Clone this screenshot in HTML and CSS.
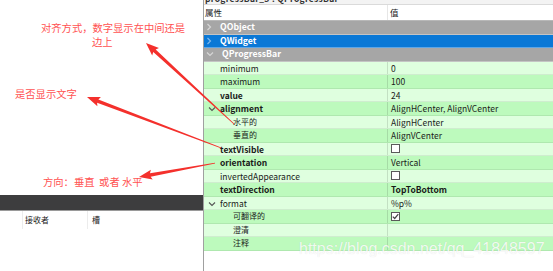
FILE: index.html
```html
<!DOCTYPE html>
<html lang="zh-CN">
<head>
    <meta charset="UTF-8">
    <title>QProgressBar 属性</title>
    <link rel="stylesheet" href="styles.css">
</head>
<body>
    <div class="shot">
        <div class="left-pane">
            <div class="notes">
                <div class="note note-align">对齐方式，数字显示在中间还是</div>
                <div class="note note-align2">边上</div>
                <div class="note note-visible">是否显示文字</div>
                <div class="note note-orient">方向：垂直&nbsp; 或者&nbsp;水平</div>
            </div>
            <div class="dock-bar"></div>
            <div class="signal-head">
                <div class="sig-cell sig-first"></div>
                <div class="sig-cell sig-recv">接收者</div>
                <div class="sig-cell sig-slot">槽</div>
            </div>
        </div>

        <div class="prop-pane">
            <div class="pane-title"><span>progressBar_3 : QProgressBar</span></div>
            <div class="prop-head">
                <div class="col-name">属性</div>
                <div class="col-value">值</div>
            </div>

            <div class="row group">
                <svg class="chev" width="6" height="8" viewBox="0 0 6 8"><path d="M1.5 1 L4.5 4 L1.5 7" /></svg>
                <span class="group-name">QObject</span>
            </div>
            <div class="row group selected">
                <svg class="chev" width="6" height="8" viewBox="0 0 6 8"><path d="M1.5 1 L4.5 4 L1.5 7" /></svg>
                <span class="group-name">QWidget</span>
            </div>
            <div class="row group">
                <svg class="chev" width="8" height="6" viewBox="0 0 8 6"><path d="M1 1.5 L4 4.5 L7 1.5" /></svg>
                <span class="group-name">QProgressBar</span>
            </div>

            <div class="row light">
                <div class="col-name">minimum</div>
                <div class="col-value">0</div>
            </div>
            <div class="row dark">
                <div class="col-name">maximum</div>
                <div class="col-value">100</div>
            </div>
            <div class="row light">
                <div class="col-name bold">value</div>
                <div class="col-value">24</div>
            </div>
            <div class="row dark">
                <div class="col-name bold">
                    <svg class="chev-dark" width="8" height="6" viewBox="0 0 8 6"><path d="M1 1.5 L4 4.5 L7 1.5" /></svg>
                    alignment
                </div>
                <div class="col-value">AlignHCenter, AlignVCenter</div>
            </div>
            <div class="row light">
                <div class="col-name sub">水平的</div>
                <div class="col-value">AlignHCenter</div>
            </div>
            <div class="row dark">
                <div class="col-name sub">垂直的</div>
                <div class="col-value">AlignVCenter</div>
            </div>
            <div class="row light">
                <div class="col-name bold">textVisible</div>
                <div class="col-value"><span class="check"></span></div>
            </div>
            <div class="row dark">
                <div class="col-name bold">orientation</div>
                <div class="col-value">Vertical</div>
            </div>
            <div class="row light">
                <div class="col-name">invertedAppearance</div>
                <div class="col-value"><span class="check"></span></div>
            </div>
            <div class="row dark">
                <div class="col-name bold">textDirection</div>
                <div class="col-value bold">TopToBottom</div>
            </div>
            <div class="row light">
                <div class="col-name">
                    <svg class="chev-dark" width="8" height="6" viewBox="0 0 8 6"><path d="M1 1.5 L4 4.5 L7 1.5" /></svg>
                    format
                </div>
                <div class="col-value">%p%</div>
            </div>
            <div class="row dark">
                <div class="col-name sub">可翻译的</div>
                <div class="col-value">
                    <span class="check">
                        <svg width="7" height="7" viewBox="0 0 7 7"><path d="M0.8 3.6 L2.7 5.5 L6.3 1.2" /></svg>
                    </span>
                </div>
            </div>
            <div class="row light">
                <div class="col-name sub">澄清</div>
                <div class="col-value"></div>
            </div>
            <div class="row dark">
                <div class="col-name sub">注释</div>
                <div class="col-value"></div>
            </div>
        </div>

        <!-- red callout arrows drawn over the screenshot -->
        <svg class="arrows" width="553" height="271" viewBox="0 0 553 271">
            <polygon transform="translate(146 43) rotate(42.6)" points="0,0 13,-5 11.5,-1.8 119.6,-0.4 119.6,0.4 11.5,1.8 13,5" />
            <polygon transform="translate(87 97) rotate(20.8)" points="0,0 13,-5 11.5,-1.8 143.4,-0.4 143.4,0.4 11.5,1.8 13,5" />
            <polygon transform="translate(139 177) rotate(-10.4)" points="0,0 13,-5 11.5,-1.8 77.3,-0.4 77.3,0.4 11.5,1.8 13,5" />
        </svg>

        <div class="watermark">https://blog.csdn.net/qq_41848597</div>
    </div>
</body>
</html>
```

FILE: styles.css
```css
* {
    margin: 0;
    padding: 0;
    box-sizing: border-box;
}

body {
    width: 553px;
    height: 271px;
    overflow: hidden;
    background: white;
    font-family: "Noto Sans CJK SC", "Noto Sans", sans-serif;
    font-size: 8.5px;
    color: #1a1a1a;
}

.shot {
    position: relative;
    width: 553px;
    height: 271px;
    display: flex;
}

/* left side: annotations + signal/slot dock */
.left-pane {
    width: 203px;
    flex-shrink: 0;
    display: flex;
    flex-direction: column;
}

.notes {
    height: 195px;
    padding-top: 21px;
    color: #ff5252;
    font-size: 10.3px;
    line-height: 14px;
}

.note-align {
    margin-left: 41px;
}

.note-align2 {
    margin-left: 92px;
}

.note-visible {
    margin-left: 15px;
    margin-top: 38px;
}

.note-orient {
    margin-left: 43px;
    margin-top: 74px;
}

.dock-bar {
    height: 16px;
    background: #3d3d3e;
    border-bottom: 1px solid #9a9a9a;
}

.signal-head {
    height: 18px;
    display: flex;
    background: white;
    font-size: 8px;
    line-height: 18px;
    color: #222;
}

.sig-cell {
    border-right: 1px solid #ececec;
    padding-left: 2px;
}

.sig-first {
    width: 23px;
}

.sig-recv {
    width: 65px;
}

.sig-slot {
    flex: 1;
    border-right: none;
    padding-left: 4px;
}

/* right side: property editor */
.prop-pane {
    flex: 1;
    border-left: 1px solid #a0a0a0;
    display: flex;
    flex-direction: column;
}

.pane-title {
    height: 4px;
    overflow: hidden;
    background: #f3f3f3;
    padding-left: 1px;
}

.pane-title span {
    display: block;
    margin-top: -6px;
    line-height: 9px;
    font-size: 8.5px;
    font-weight: bold;
    color: #333;
    letter-spacing: 0.3px;
}

.prop-head {
    height: 17px;
    display: flex;
    background: white;
    border-top: 1px solid #dadada;
    border-bottom: 1px solid #b8b8b8;
    line-height: 15px;
    font-size: 8.5px;
}

.prop-head .col-name {
    width: 184px;
    padding-left: 1px;
    border-right: 1px solid #e6e6e6;
}

.prop-head .col-value {
    padding-left: 2px;
}

.row {
    height: 13.5px;
    display: flex;
    align-items: center;
    border-bottom: 1px solid rgba(0, 0, 0, 0.07);
    line-height: 12px;
}

.row .col-name {
    width: 184px;
    height: 100%;
    display: flex;
    align-items: center;
    padding-left: 16px;
    border-right: 1px solid rgba(0, 0, 0, 0.12);
    position: relative;
}

.row .col-value {
    flex: 1;
    height: 100%;
    display: flex;
    align-items: center;
    padding-left: 3px;
}

.col-name.sub {
    padding-left: 29px;
    font-size: 8px;
}

.bold {
    font-weight: bold;
}

.light {
    background: #dfffdf;
}

.dark {
    background: #bdfabd;
}

.group {
    background: #a6a6a6;
    border-bottom: 1px solid #c4c4c4;
    padding-left: 2px;
}

.group.selected {
    background: #0a78d6;
    border-bottom-color: #5ea6e6;
}

.group-name {
    margin-left: 8px;
    color: white;
    font-weight: bold;
    font-size: 8.7px;
}

.chev {
    fill: none;
    stroke: #d6d6d6;
    stroke-width: 1.2;
}

.selected .chev {
    stroke: #7fb8ea;
}

.chev-dark {
    position: absolute;
    left: 4px;
    top: 4px;
    fill: none;
    stroke: #555;
    stroke-width: 1.1;
}

.check {
    width: 9px;
    height: 9px;
    border: 1px solid #5a5a5a;
    background: white;
    display: flex;
    align-items: center;
    justify-content: center;
}

.check svg {
    fill: none;
    stroke: #444;
    stroke-width: 1.2;
}

/* overlays */
.arrows {
    position: absolute;
    left: 0;
    top: 0;
    pointer-events: none;
}

.arrows polygon {
    fill: #f4302c;
}

.watermark {
    position: absolute;
    left: 299px;
    top: 240px;
    font-family: "Liberation Sans", Arial, sans-serif;
    font-size: 16px;
    line-height: 18px;
    color: rgba(255, 255, 255, 0.85);
    text-shadow: 0 0 1px rgba(0, 0, 0, 0.12);
    pointer-events: none;
}
```
